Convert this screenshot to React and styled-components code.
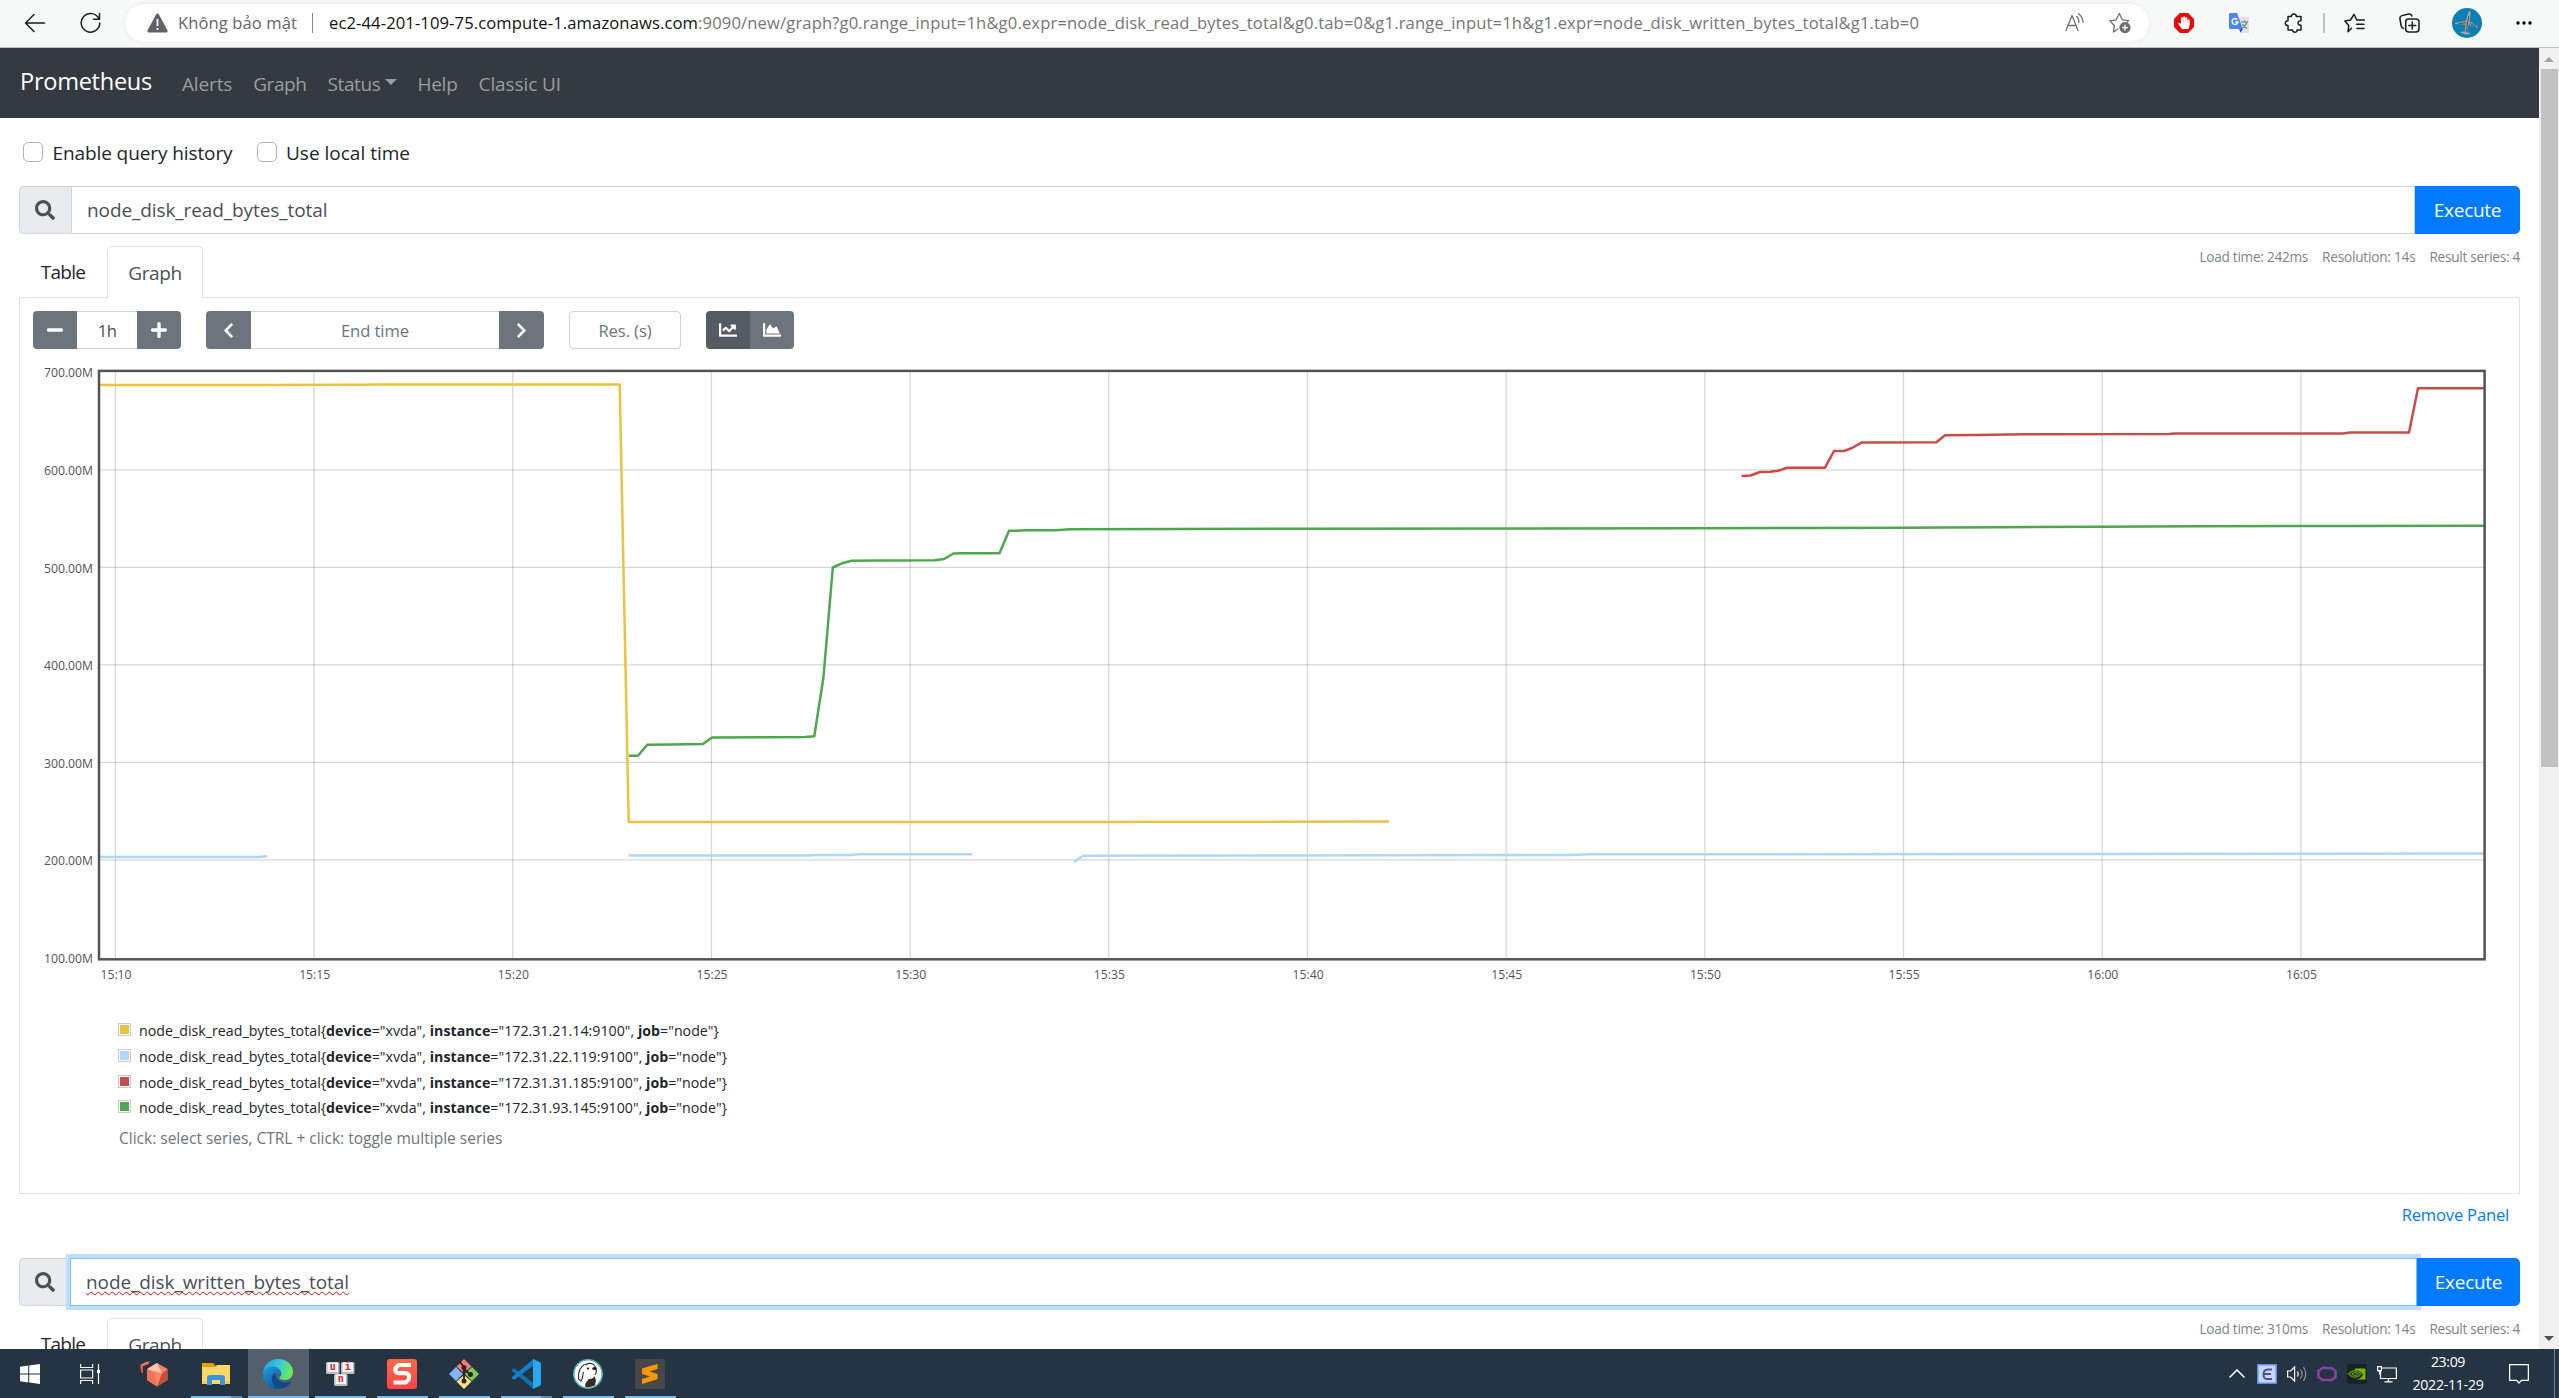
import React from 'react';
import styled, { createGlobalStyle, css } from 'styled-components';
import { FaSearch, FaMinus, FaPlus, FaChevronLeft, FaChevronRight, FaChartLine, FaChartArea, FaHandPaper } from 'react-icons/fa';

const Global = createGlobalStyle`
  * { box-sizing: border-box; }
  body { margin: 0; overflow: hidden; background: #fff; color: #212529;
    font-family: "Segoe UI", "Open Sans", "Noto Sans", sans-serif; font-size: 19px; line-height: 30px; }
  svg { display: block; flex: none; }
`;

const Screen = styled.div`
  width: 2559px; height: 1398px; overflow: hidden; display: flex; flex-direction: column;
`;
const Text = styled.span`
  white-space: nowrap; letter-spacing: ${p => p.$ls || 0}px; color: ${p => p.$color || 'inherit'};
`;

/* ---------- browser toolbar ---------- */
const Toolbar = styled.header`
  height: 48px; flex: none; display: flex; align-items: flex-start; background: #f7f9f8; border-bottom: 1px solid #bcc2bd;
`;
const NavButtons = styled.div`
  width: 125px; height: 46px; display: flex; align-items: center; gap: 34px; padding-left: 24px;
`;
const AddressBar = styled.div`
  width: 2024px; height: 38px; margin-top: 4px; border-radius: 19px; background: #fff; display: flex; align-items: center;
  padding: 0 18px 0 22px; box-shadow: 0 0 4px rgba(0,0,0,.07); font-size: 16.6px; color: #767676;
`;
const Security = styled.div`display: flex; align-items: center; gap: 10px; color: #666; width: 165px;`;
const AddressDivider = styled.div`width: 1px; height: 20px; background: #888; margin-right: 16px;`;
const Url = styled.div`flex: 1; white-space: nowrap; color: #767676;`;
const AddressTools = styled.div`display: flex; align-items: center; gap: 24px;`;
const Extensions = styled.div`display: flex; align-items: center; height: 46px; margin-left: 7px;`;
const Slot = styled.div`width: ${p => p.$w || 55}px; display: flex; justify-content: center;`;
const SlotDivider = styled.div`width: 2px; height: 20px; margin: 0 2px; background: #c3c3c3;`;

/* ---------- page ---------- */
const Viewport = styled.div`height: 1301px; flex: none; display: flex; overflow: hidden;`;
const Page = styled.main`width: 2539px; height: 1301px; overflow: hidden;`;
const Scrollbar = styled.aside`
  width: 20px; background: #f1f1f1; display: flex; flex-direction: column; align-items: center; padding: 9px 0 8px;
`;
const Thumb = styled.div`width: 17px; height: 698px; margin-top: 7px; background: #c1c1c1;`;
const Arrow = styled.div`
  width: 0; height: 0; border: 5px solid transparent;
  ${p => p.$down ? css`border-top-color: #505050; border-bottom: 0; margin-top: auto;` : css`border-bottom-color: #a3a3a3; border-top: 0;`}
`;
const Navbar = styled.nav`
  height: 70px; background: #343a40; display: flex; align-items: center; padding: 1px 20px 0; color: #9a9da0;
`;
const Brand = styled.div`font-size: 23.6px; color: #fff; width: 162px; padding-bottom: 5px;`;
const NavItem = styled.div`display: flex; align-items: center; margin-right: 21px; height: 30px;`;
const Caret = styled.i`border: 6px solid transparent; border-top-color: #9a9da0; border-bottom: 0; margin: -4px -1px 0 5px;`;
const Content = styled.div`padding: 0 19px;`;
const Options = styled.div`height: 68px; padding: 1px 0 0 4px; display: flex; align-items: center;`;
const Option = styled.label`display: flex; align-items: center; gap: 9.5px; margin-right: 24px;`;
const Checkbox = styled.span`width: 20px; height: 20px; border: 1.3px solid #adb5bd; border-radius: 5px; margin-top: -2px;`;

const QueryRow = styled.div`height: 48px; width: 2501px; display: flex;`;
const Addon = styled.div`
  width: 52px; background: #e9ecef; border: 1px solid #ced4da; border-right-width: 0; border-radius: 5px 0 0 5px;
  display: flex; align-items: center; justify-content: center; color: #495057; padding-right: 1.5px;
`;
const Expression = styled.div`
  flex: 1; border: 1px solid #ced4da; background: #fff; color: #495057; padding-left: 15px; display: flex; align-items: center;
  ${p => p.$focus && css`border-color: #80bdff; box-shadow: 0 0 0 4px #bfdeff; margin-left: -1px;`}
`;
const Misspelled = styled.span`text-decoration: underline wavy #e00b0b 1px; text-decoration-skip-ink: none; text-underline-offset: 2px;`;
const Execute = styled.button`
  width: ${p => p.$w}px; border: 0; border-radius: 0 5px 5px 0; background: #007bff; color: #fff; font: inherit;
  position: relative; padding: 0;
`;
const TabBar = styled.div`height: 64px; padding-top: 12px; width: 2501px; display: flex; align-items: flex-start;`;
const Tab = styled.div`
  height: 52px; width: ${p => p.$active ? 96 : 88}px; display: flex; align-items: center; justify-content: center; border-radius: 5px 5px 0 0;
  ${p => p.$active ? css`border: 1px solid #dee2e6; border-bottom: 0; background: #fff; color: #495057; margin-bottom: -1px; position: relative;` : ''}
`;
const Stats = styled.div`margin: -2px 0 0 auto; display: flex; gap: 14px; font-size: 13.6px; color: #7b848c; line-height: 26px;`;
const Panel = styled.section`
  width: 2501px; height: 897px; margin-top: -1px; border: 1px solid #dee2e6; display: flex; flex-direction: column;
`;
const Controls = styled.div`
  height: 51px; padding: 13px 0 0 13px; display: flex; gap: 25px; font-size: 16.6px; flex: none;
`;
const Group = styled.div`height: 38px; display: flex; border-radius: 4px; overflow: hidden;`;
const GroupButton = styled.div`
  width: ${p => p.$w || 44}px; background: ${p => p.$on ? '#545b62' : '#6c757d'}; color: #fff; display: flex; align-items: center; justify-content: center;
`;
const Field = styled.div`
  width: ${p => p.$w}px; border: solid #ced4da; border-width: ${p => p.$solo ? '1px' : '1px 0'}; border-radius: ${p => p.$solo ? 4 : 0}px;
  color: ${p => p.$dark ? '#495057' : '#6c757d'}; display: flex; align-items: center; justify-content: center; padding-top: 1px;
`;
const AxisText = styled.text`font-size: 12.2px; fill: #545454; text-anchor: ${p => p.$end ? 'end' : 'middle'};`;
const Legend = styled.div`padding: 27px 0 0 98px; font-size: 14.2px;`;
const LegendRow = styled.div`height: 25.7px; display: flex; align-items: center; gap: 8px; line-height: 25px;`;
const Swatch = styled.i`width: 13px; height: 13px; border: 1px solid #ccc; padding: 1px; background: ${p => p.$c} content-box; margin-top: -2px;`;
const Hint = styled.div`padding: 4px 0 0 1px; font-size: 15.5px; color: #6c757d; line-height: 26px;`;
const RemoveRow = styled.div`
  height: 64px; width: 2501px; padding: 6px 11px 0 0; display: flex; justify-content: flex-end; color: #007bff; font-size: 16.6px;
`;

/* ---------- taskbar ---------- */
const Taskbar = styled.footer`height: 49px; flex: none; background: #243443; display: flex; color: #fff;`;
const Launcher = styled.div`
  width: ${p => p.$w || 60}px; height: 49px; display: flex; align-items: center; justify-content: center; padding: 1px 0 0 ${p => p.$pad || 0}px;
`;
const Task = styled.div`
  width: 62px; height: 49px; display: flex; flex-direction: column; align-items: center;
  ${p => p.$active && css`background: linear-gradient(#53606b,#53606b) 1px 0 / 61px 49px no-repeat;`}
`;
const TaskIcon = styled.div`height: 47px; display: flex; align-items: center; padding-top: 3px;`;
const Running = styled.div`
  height: 2px; width: ${p => p.$wide ? 61 : 51}px; background: ${p => p.$multi ? 'linear-gradient(90deg,#76b9ed 40px,#5a8ab2 40px)' : '#76b9ed'};
`;
const Tray = styled.div`margin-left: auto; display: flex; align-items: center; padding-right: 4px;`;
const TraySlot = styled.div`width: 30px; display: flex; justify-content: center;`;
const Clock = styled.div`
  width: 82px; margin: 0 20px 0 5px; text-align: center; font-size: 14.2px; line-height: 22.5px; display: flex; flex-direction: column;
`;
const ShowDesktop = styled.div`width: 1px; height: 49px; background: #7b858e; margin-left: 25px;`;

/* ---------- chart ---------- */
const SERIES = [
  ['#4da74d', '628.7,755.7 638,755.7 647.3,744.8 670,744.5 703,744 712,737.5 765,737.3 805,737 814.3,736.3 823.5,677 832.8,567.5 842,563.3 851.5,560.7 878,560.4 935,560.2 944,559 953.5,553.5 962,553.2 999.5,553.2 1009,530.8 1017,530.8 1026,530.3 1056,530.2 1070,529.2 1300,528.8 1700,528.2 1810,528 1900,527.7 2000,527.2 2100,526.8 2200,526.3 2350,525.9 2484,525.8'],
  ['#cb4b4b', '1741.6,476 1750.5,475.5 1760,472 1770,471.8 1778,470.7 1787,467.7 1825,467.7 1834,451 1844,451 1852,448 1861.5,442.6 1936.5,442.3 1945,435.2 1975,434.9 2025,434.3 2169,434.1 2175,433.5 2343,433.4 2350,432.6 2409,432.5 2418,388.3 2484,388.2'],
  ['#afd8f8', '100,857 258,857 267,856.2'],
  ['#afd8f8', '628.7,855.5 805,855.5 815,855.1 850,855 860,854.3 972,854.2'],
  ['#afd8f8', '1074,862 1083,855.8 1260,855.4 1570,855 1590,854.3 2100,854 2484,853.4'],
  ['#edc240', '100,385 360,384.8 380,384.5 619.7,384.4 628.7,822 800,822 1100,822 1160,821.7 1389,821.6'],
];
const HOURS = ['15:10', '15:15', '15:20', '15:25', '15:30', '15:35', '15:40', '15:45', '15:50', '15:55', '16:00', '16:05'];
const LEVELS = ['700.00M', '600.00M', '500.00M', '400.00M', '300.00M', '200.00M', '100.00M'];

const Chart = () => (
  <svg width="2499" height="642" viewBox="20 349 2499 642">
    {HOURS.map((h, i) => (
      <g key={h}>
        <line x1={115.4 + i * 198.68} x2={115.4 + i * 198.68} y1="371" y2="958" stroke="#545454" strokeOpacity=".24" strokeWidth="1.25" />
        <AxisText x={116 + i * 198.68} y="978.8">{h}</AxisText>
      </g>
    ))}
    {LEVELS.map((l, i) => (
      <g key={l}>
        {i > 0 && i < 6 && <line x1="99" x2="2485" y1={372.3 + i * 97.52} y2={372.3 + i * 97.52} stroke="#545454" strokeOpacity=".24" strokeWidth="1.25" />}
        <AxisText $end x="93" y={377.3 + i * 97.6}>{l}</AxisText>
      </g>
    ))}
    {SERIES.map(([c, pts], i) => <polyline key={i} points={pts} fill="none" stroke={c} strokeWidth="2.5" strokeLinejoin="round" />)}
    <rect x="99" y="370.9" width="2385.6" height="588.4" fill="none" stroke="#545454" strokeWidth="2.5" />
  </svg>
);

const LEGEND = [['#edc240', '172.31.21.14:9100'], ['#afd8f8', '172.31.22.119:9100'], ['#cb4b4b', '172.31.31.185:9100'], ['#4da74d', '172.31.93.145:9100']];

/* ---------- icons ---------- */
const line = { fill: 'none', stroke: '#1b1b1b', strokeWidth: 1.5, strokeLinecap: 'round', strokeLinejoin: 'round' };
const BackIcon = () => <svg width="22" height="20" viewBox="0 0 22 20"><path {...line} d="M20.500 10H1.500M10 1.500L1.500 10l8.500 8.500" /></svg>;
const ReloadIcon = () => <svg width="21" height="22" viewBox="0 0 21 22"><path {...line} d="M19 7A9.300 9.300 0 1 0 19.800 11M19.500 1.500V7.300H13.500" /></svg>;
const WarnIcon = () => <svg width="21" height="20" viewBox="0 0 21 20"><path fill="#5f6368" d="M9.200 1.200a1.500 1.500 0 0 1 2.600 0l8.600 16a1.500 1.500 0 0 1-1.300 2.300H1.900a1.500 1.500 0 0 1-1.300-2.300z" /><path d="M10.500 6v7M10.500 15v2" stroke="#fff" strokeWidth="1.800" /></svg>;
const ReadIcon = () => <svg width="20" height="20" viewBox="0 0 20 20"><path {...line} stroke="#6e6e6e" strokeWidth="1.300" d="M1 17.500L7 2.500l6 15M3.200 12.500h7.600M11.800 3.500a7 7 0 0 1 2 6M13.500 .8a11 11 0 0 1 4.500 8.500" /></svg>;
const StarAddIcon = () => <svg width="22" height="22" viewBox="0 0 22 22"><path {...line} stroke="#6e6e6e" strokeWidth="1.300" d="M9 17l-4.600 3 .9-6.500L.9 8.800l6.200-1L10.400 1.500l2.900 6.300 6.300.8-1.300 1.500" /><circle cx="16" cy="15.600" r="5.600" fill="#6e6e6e" /><path d="M16 12.700v5.800M13.100 15.600h5.800" stroke="#fff" strokeWidth="1.400" /></svg>;
const BlockIcon = () => (
  <svg width="20" height="20" viewBox="0 0 20 20"><path fill="#e60a0a" d="M5.900 0h8.200L20 5.900v8.200L14.100 20H5.900L0 14.100V5.900z" /><FaHandPaper x="3.500" y="3.200" color="#fff" size={13} /></svg>
);
const TranslateIcon = () => (
  <svg width="20" height="20" viewBox="0 0 20 20"><path fill="#dfe1e3" d="M8 4h12v16h-8z" /><path d="M12 9h7M15.500 7.500V9M17.800 9c-.5 3-2.500 4.800-4.500 6M13.500 11c1 2 2.500 3.500 4.500 4.500" stroke="#607d8b" strokeWidth="1.200" fill="none" /><path fill="#3a4fb8" d="M10 16h4l-2.500 3.800z" /><path fill="#4a86f0" d="M1.200 0H8l5.800 16H1.200Q0 16 0 15V1Q0 0 1.200 0z" /><path d="M8.300 6.500A3 3 0 1 0 9 9H6.200" fill="none" stroke="#fff" strokeWidth="1.300" /></svg>
);
const PuzzleIcon = () => <svg width="20" height="20" viewBox="0 0 20 20"><path {...line} d="M4 3.500h3.400c-.3-3.400 5.200-3.400 4.900 0H17v4.300c-3.900-.6-3.900 4.900 0 4.400V17h-4c.5 3-4.800 3-4.400 0H4v-4.500c-3.600.4-3.600-5 0-4.700z" /></svg>;
const FavIcon = () => <svg width="21" height="20" viewBox="0 0 21 20"><path {...line} d="M7.500 15.200L4 18.600l.7-6L.9 8l5.600-1L10 1.300l2.500 5.200M12.500 7h8M12.500 11.300h7.500M13 15.500h7" /></svg>;
const CollectIcon = () => <svg width="21" height="20" viewBox="0 0 21 20"><path {...line} d="M4.500 15.500C3 15.300 2.500 14.500 2.200 13L.9 5.500C.7 4 1.500 3 3 2.600L9.500 1c1.800-.4 3 .5 3.400 2" /><rect {...line} x="6.700" y="6" width="13.300" height="13" rx="3" /><path {...line} d="M13.300 9v7M9.800 12.500h7" /></svg>;
const AvatarIcon = () => (
  <svg width="30" height="30" viewBox="0 0 30 30"><circle cx="15" cy="15" r="15" fill="#0a80b3" /><path fill="#a7a5a6" d="M17.600 3c1 0 1.200 2 .8 5l-.7 5.500 8.300 5.300-.6 1-8.600-3.200-1.900 7.400 3.400 1.500-.2 1-4-.3-.8 1-.6-1.200-4-1.200.2-1 3.900-.2.700-7.100L3 16l.2-1.200L14 12.700l1.800-7C16.300 4 16.900 3 17.600 3z" /><path stroke="#5f5a5a" strokeWidth="1.200" d="M16.800 8l-2.600 16M6 15.600l8.500-1M18 15.500l6 3" /></svg>
);
const DotsIcon = () => <svg width="16" height="4" viewBox="0 0 16 4"><circle cx="2" cy="2" r="1.700" /><circle cx="8" cy="2" r="1.700" /><circle cx="14" cy="2" r="1.700" /></svg>;

const WindowsIcon = () => <svg width="20" height="20" viewBox="0 0 20 20"><path fill="#fff" d="M0 2.700l8.200-1.100v7.900H0zM9.200 1.500L20 0v9.500H9.200zM0 10.500h8.200v7.900L0 17.300zM9.200 10.500H20V20L9.200 18.500z" /></svg>;
const TaskViewIcon = () => <svg width="20" height="20" viewBox="0 0 20 20"><path stroke="#fff" strokeWidth="1.200" fill="none" d="M.6 0v3.500h12V0M.6 20v-3.500h12V20M.6 6h12v8H.6zM18.500 0v20" /><path fill="#fff" d="M17 6h3v3.200h-3z" /></svg>;
const CubeIcon = () => (
  <svg width="28" height="26" viewBox="0 0 28 26"><path fill="#f58468" d="M17 2l10.500 6v11L17 25.500 7 19V8z" /><path fill="#fbc4b0" d="M17 2l5 10.500L7 8z" /><path fill="#ee7256" d="M7 8l7.500 5L17 25.500 7 19z" /><path fill="#c84f3b" d="M22 12.500L27.500 8v11L17 25.500z" /><path fill="#243443" d="M4.500 12L9 5.500 14 3l-7 4.500v6z" /><path fill="#d45a42" d="M0 4l3 1.500v7L1 11zM7 1L9.500 0l-.5 3-6 2.500L0 4z" /><path fill="#f08a6c" d="M1 3.500L7 .8l2 .8-6.500 3z" /></svg>
);
const FolderIcon = () => (
  <svg width="28" height="24" viewBox="0 0 28 24"><path fill="#e0a000" d="M0 1h11l2.500 2.500V8H0z" /><path fill="#ffd766" d="M0 5h13l2-2h13v19H0z" /><path fill="#3a96dd" d="M8 13h12q3 0 3 3v7h-5v-5h-8v5H5v-7q0-3 3-3z" /><path fill="#ffca45" d="M0 19h5v3H0zM23 19h5v3h-5z" /></svg>
);
const EdgeIcon = () => (
  <svg width="30" height="30" viewBox="0 0 24 24">
    <defs>
      <linearGradient id="edgeA" x1="0" y1="0" x2="1" y2=".3"><stop offset="0" stopColor="#1b9de2" /><stop offset=".5" stopColor="#35c1e6" /><stop offset="1" stopColor="#66eb5f" /></linearGradient>
      <linearGradient id="edgeB" x1="0" y1="0" x2=".6" y2="1"><stop offset="0" stopColor="#1f9fe0" /><stop offset="1" stopColor="#0c59a4" /></linearGradient>
    </defs>
    <path fill="url(#edgeA)" d="M0 11.500C.3 5 5.500 0 12 0c7 0 12 4.800 12 10.300 0 4-3 6.400-6.500 6.400-3 0-4.400-1-4.400-1.800 0-.8 1.400-1.300 1.400-3.200C14.500 9 12 6.500 8.500 6.500 4 6.500.8 9 0 11.500z" />
    <path fill="url(#edgeB)" d="M0 12c0-4 4-6.200 8-6 3.800.2 6.500 3 6.500 5.700 0 .8-.4 1.600-.9 2.200-.7-2-2-2.900-3.600-2.900C8 12 7 14 7 16c0 4.500 4 7.500 7.500 7.700C6.500 25.300 0 20 0 12z" />
    <path fill="#114a8b" d="M9.900 10.500C8 12 7 14 7 16c0 4.500 3.800 8 7.800 7.700 3.500-.6 6.200-2.700 7.800-5.400.3-.6-.1-.8-.6-.5-1.200.6-2.500.9-4 .9-4.500 0-8.800-3-8.100-8.200z" />
  </svg>
);
const KeyGlyph = styled.text`font: 700 10px "DejaVu Sans Mono", monospace; fill: #e0282e; text-anchor: middle;`;
const UniKeyIcon = () => (
  <svg width="30" height="26" viewBox="0 0 30 26">
    {[[1, 1, 'u'], [16, 1, 'i'], [9, 13, 'n']].map(([x, y, c]) => (
      <g key={c}><rect x={x} y={y} width="13.500" height="12" rx="1.500" fill="#b9bcc0" /><rect x={x + 1.5} y={y + .5} width="10.500" height="9.500" rx="1" fill="#f4f4f4" /><KeyGlyph x={x + 6.8} y={y + 8}>{c}</KeyGlyph></g>
    ))}
  </svg>
);
const SnagitIcon = () => (
  <svg width="30" height="30" viewBox="0 0 30 30"><defs><linearGradient id="sn" x1="0" y1="0" x2="0" y2="1"><stop offset="0" stopColor="#ff6a45" /><stop offset="1" stopColor="#ff4048" /></linearGradient></defs><rect width="30" height="30" rx="3" fill="url(#sn)" /><path fill="none" stroke="#fff" strokeWidth="4.200" strokeLinejoin="bevel" d="M24 6H11.500L8.500 9v3.500l2.500 1.700h8.500l2.500 2V20l-3 3.500H6.500" /></svg>
);
const GitIcon = () => (
  <svg width="30" height="30" viewBox="0 0 30 30"><path fill="#f87b7f" d="M15 0l7.500 7.500L15 14 7.500 7.500z" /><path fill="#80b3ff" d="M7 8l7 7-7 7-7-7z" /><path fill="#85ca55" d="M23 8l7 7-7 7-7-7z" /><path fill="#ffe37c" d="M15 16l7.500 6.500L15 30l-7.500-7.500z" /><path stroke="#2b2320" strokeWidth="1.800" fill="none" d="M10.500 2.500L15 8v14M15 10l6 5.500" /><circle cx="15" cy="8.500" r="2.500" fill="#2b2320" /><circle cx="15" cy="22" r="2.500" fill="#2b2320" /><circle cx="21.500" cy="15.500" r="2.500" fill="#2b2320" /></svg>
);
const CodeIcon = () => (
  <svg width="30" height="30" viewBox="0 0 30 30"><path fill="#0f6fb3" d="M1 10.500L3 9l19.500 15V30L1 12z" /><path fill="#1180c8" d="M1 19.500L3 21 22.500 6.500V0L1 18z" /><path fill="#29a6ee" d="M22 0l6.500 3q1.500.7 1.500 2v20q0 1.300-1.500 2L22 30z" /></svg>
);
const BeaverIcon = () => (
  <svg width="30" height="30" viewBox="0 0 30 30"><circle cx="15" cy="15" r="14.200" fill="#fff" stroke="#4fb2b5" strokeWidth="1.600" /><path fill="#3a2a25" d="M12.500 28c-1.500-4 2-5.500 3-8 3 .5 5-1 6-3l1.500 4.500L22 26c-2 1.800-6 2.600-9.500 2z" /><path fill="none" stroke="#3a2a25" strokeWidth="1.100" d="M11.500 5.500C7 8 5 13 5.500 20l2.500 2c2-2 1.500-6 2.500-9M12 6c3-2.500 8-2 9.500.5 2 3 2.200 7 .5 9.500" /><ellipse cx="15" cy="9.500" rx="1.300" ry="1" fill="#2b201d" /><ellipse cx="21.500" cy="9.500" rx="2.400" ry="1.600" fill="#2b201d" /></svg>
);
const SublimeIcon = () => (
  <svg width="30" height="30" viewBox="0 0 30 30"><rect width="30" height="30" rx="2.500" fill="#484848" /><path fill="#ff9800" d="M7 9.500L22.500 5v5l-8 2.500 8 2.500v5.200L7 25v-5l8-2.500-8-2.600z" /></svg>
);
const tray = { fill: 'none', stroke: '#fff', strokeWidth: 1.2 };
const TASKS = [[FolderIcon, 'multi'], [EdgeIcon, 'active'], [UniKeyIcon], [SnagitIcon], [GitIcon], [CodeIcon, 'multi'], [BeaverIcon], [SublimeIcon]];

const QueryTabs = ({ load }) => (
  <TabBar>
    <Tab><Text $ls={-0.7}>Table</Text></Tab>
    <Tab $active><Text $ls={-0.42}>Graph</Text></Tab>
    <Stats><Text $ls={-0.25}>Load time: {load}</Text><Text $ls={-0.2}>Resolution: 14s</Text><Text $ls={-0.26}>Result series: 4</Text></Stats>
  </TabBar>
);

export default function App() {
  return (
    <Screen>
      <Global />
      <Toolbar>
        <NavButtons><BackIcon /><ReloadIcon /></NavButtons>
        <AddressBar>
          <Security><WarnIcon /><Text $ls={0.078}>Không bảo mật</Text></Security>
          <AddressDivider />
          <Url><Text $ls={0.103} $color="#111">ec2-44-201-109-75.compute-1.amazonaws.com</Text><Text $ls={0.141}>:9090/new/graph?g0.range_input=1h&amp;g0.expr=node_disk_read_bytes_total&amp;g0.tab=0&amp;g1.range_input=1h&amp;g1.expr=node_disk_written_bytes_total&amp;g1.tab=0</Text></Url>
          <AddressTools><ReadIcon /><StarAddIcon /></AddressTools>
        </AddressBar>
        <Extensions>
          <Slot><BlockIcon /></Slot><Slot><TranslateIcon /></Slot><Slot><PuzzleIcon /></Slot>
          <SlotDivider />
          <Slot><FavIcon /></Slot><Slot><CollectIcon /></Slot><Slot $w={59}><AvatarIcon /></Slot><Slot $w={56}><DotsIcon /></Slot>
        </Extensions>
      </Toolbar>
      <Viewport>
        <Page>
          <Navbar>
            <Brand><Text $ls={-0.3}>Prometheus</Text></Brand>
            <NavItem><Text $ls={-0.14}>Alerts</Text></NavItem>
            <NavItem><Text $ls={-0.45}>Graph</Text></NavItem>
            <NavItem><Text $ls={-0.36}>Status</Text><Caret /></NavItem>
            <NavItem><Text $ls={-0.27}>Help</Text></NavItem>
            <NavItem><Text $ls={-0.1}>Classic UI</Text></NavItem>
          </Navbar>
          <Content>
            <Options>
              <Option><Checkbox /><Text $ls={-0.098}>Enable query history</Text></Option>
              <Option><Checkbox /><Text>Use local time</Text></Option>
            </Options>
            <QueryRow>
              <Addon><FaSearch size={20} /></Addon>
              <Expression><Text $ls={-0.09}>node_disk_read_bytes_total</Text></Expression>
              <Execute $w={105}><Text $ls={-0.3}>Execute</Text></Execute>
            </QueryRow>
            <QueryTabs load="242ms" />
            <Panel>
              <Controls>
                <Group><GroupButton><FaMinus size={18} /></GroupButton><Field $w={60} $dark><Text $ls={-0.5}>1h</Text></Field><GroupButton><FaPlus size={18} /></GroupButton></Group>
                <Group><GroupButton $w={45}><FaChevronLeft size={17} /></GroupButton><Field $w={248}><Text $ls={-0.08}>End time</Text></Field><GroupButton $w={45}><FaChevronRight size={17} /></GroupButton></Group>
                <Field $w={112} $solo><Text $ls={-0.1}>Res. (s)</Text></Field>
                <Group><GroupButton $on><FaChartLine size={18} /></GroupButton><GroupButton><FaChartArea size={18} /></GroupButton></Group>
              </Controls>
              <Chart />
              <Legend>
                {LEGEND.map(([c, ip]) => (
                  <LegendRow key={ip}><Swatch $c={c} /><Text $ls={0.02}>node_disk_read_bytes_total{'{'}<b>device</b>="xvda", <b>instance</b>="{ip}", <b>job</b>="node"{'}'}</Text></LegendRow>
                ))}
                <Hint>Click: select series, CTRL + click: toggle multiple series</Hint>
              </Legend>
            </Panel>
            <RemoveRow><Text $ls={-0.2}>Remove Panel</Text></RemoveRow>
            <QueryRow>
              <Addon><FaSearch size={20} /></Addon>
              <Expression $focus><Misspelled><Text $ls={-0.078}>node_disk_written_bytes_total</Text></Misspelled></Expression>
              <Execute $w={103}><Text $ls={-0.3}>Execute</Text></Execute>
            </QueryRow>
            <QueryTabs load="310ms" />
          </Content>
        </Page>
        <Scrollbar><Arrow /><Thumb /><Arrow $down /></Scrollbar>
      </Viewport>
      <Taskbar>
        <Launcher><WindowsIcon /></Launcher>
        <Launcher><TaskViewIcon /></Launcher>
        <Launcher $w={65} $pad={3}><CubeIcon /></Launcher>
        {TASKS.map(([Icon, mode], i) => (
          <Task key={i} $active={mode === 'active'}><TaskIcon><Icon /></TaskIcon><Running $wide={mode === 'active'} $multi={mode === 'multi'} /></Task>
        ))}
        <Tray>
          <TraySlot><svg width="16" height="9" viewBox="0 0 16 9"><path {...tray} strokeWidth="1.500" d="M.5 8.500L8 1l7.500 7.500" /></svg></TraySlot>
          <TraySlot><svg width="20" height="20" viewBox="0 0 20 20"><rect width="20" height="20" fill="#5b8def" /><rect x="1.500" y="1.500" width="17" height="17" fill="#c9d6f7" /><path fill="none" stroke="#46558f" strokeWidth="2" d="M15 5.500h-4Q6.500 5.500 6.500 10.500T11 15h4M7 10h7" /></svg></TraySlot>
          <TraySlot><svg width="20" height="18" viewBox="0 0 20 18"><path {...tray} d="M.6 6v6h3l4 4V2l-4 4z" /><path {...tray} d="M10.500 6.500q1.500 2.500 0 5" /><path {...tray} stroke="#8b949c" d="M13.500 4.500q3 4.500 0 9M16.500 2q4.500 7 0 14" /></svg></TraySlot>
          <TraySlot><svg width="20" height="16" viewBox="0 0 20 16"><path fill="none" stroke="#8b3fa0" strokeWidth="2.500" d="M5.500 2h9L18.500 5v6l-4 3h-9l-4-3V5z" /></svg></TraySlot>
          <TraySlot><svg width="20" height="20" viewBox="0 0 20 20"><rect width="20" height="20" rx="2" fill="#1b2127" /><path fill="#76b900" d="M8 4.500h10.500v11H9q5-.5 7-5Q13 6 8 6z" /><path fill="none" stroke="#5b8d10" strokeWidth="1.300" d="M1.500 10Q8 3 14 10q-6 6.500-12.500 0zM5 10q3-3.500 6 0-3 3-6 0z" /></svg></TraySlot>
          <TraySlot><svg width="20" height="18" viewBox="0 0 20 18"><path {...tray} d="M5 3h14.400v10.500H3.500V6M.6 1.600h3.800v4H.6zM2.500 5.500v4M11.500 13.500v3M7.500 16.800h8" /></svg></TraySlot>
          <Clock><Text $ls={-0.4}>23:09</Text><Text $ls={-0.3}>2022-11-29</Text></Clock>
          <svg width="20" height="20" viewBox="0 0 20 20"><path {...tray} strokeWidth="1.300" d="M.6.700h18.800v15.600h-7L10 19l-2.400-2.700h-7z" /></svg>
          <ShowDesktop />
        </Tray>
      </Taskbar>
    </Screen>
  );
}
